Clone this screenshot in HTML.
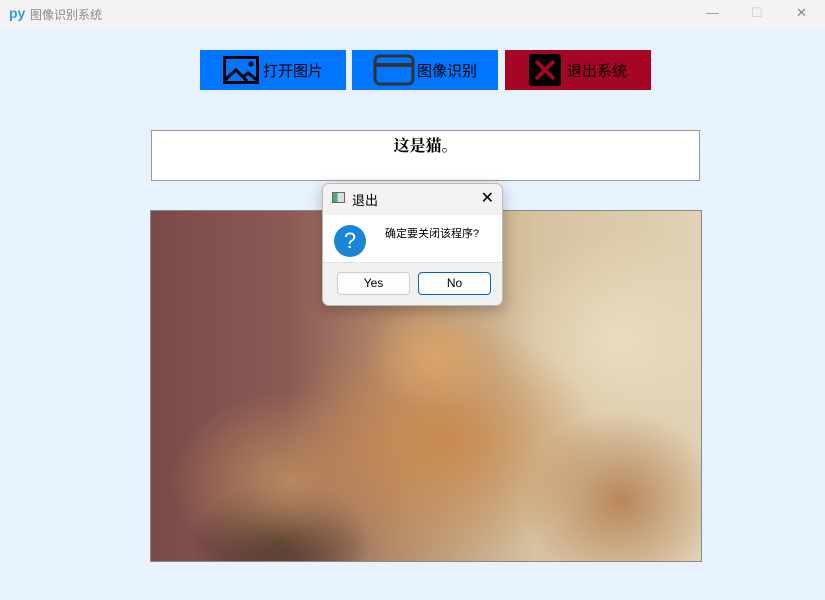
<!DOCTYPE html>
<html><head><meta charset="utf-8"><style>
*{margin:0;padding:0;box-sizing:border-box}
body{width:825px;height:600px;background:#e8f2fe;position:relative;overflow:hidden;font-family:"Liberation Sans","Noto Sans CJK SC",sans-serif}
.tb{position:absolute;left:0;top:0;width:825px;height:29px;background:#f3f3f3}
.tb .py{position:absolute;left:9px;top:5px;color:#2b9be0;font-weight:bold;font-size:14px}
.tb .t{position:absolute;left:30px;top:6px;color:#8a8a8a;font-size:12px}
.tb .c{position:absolute;top:5px;color:#888;font-size:13px}
.btn{position:absolute;top:50px;height:40px;width:146px;display:flex;align-items:center;justify-content:center;font-size:15px;color:#000}
.res{position:absolute;left:151px;top:130px;width:549px;height:51px;background:#fff;border:1px solid #999;text-align:center;font-family:"Liberation Serif","Noto Serif CJK SC",serif;font-weight:bold;font-size:16px;padding-top:2px}
.img{position:absolute;left:150px;top:210px;width:552px;height:352px;border:1px solid #888;
background:
radial-gradient(ellipse 70px 55px at 285px 145px,#d9a36a,transparent),
radial-gradient(ellipse 160px 120px at 290px 230px,#c88a4f,transparent),
radial-gradient(ellipse 120px 90px at 140px 270px,#b7875e,transparent),
radial-gradient(ellipse 100px 90px at 470px 290px,#b9875a,transparent),
radial-gradient(ellipse 120px 110px at 470px 130px,#eadcc0,transparent),
radial-gradient(ellipse 90px 60px at 130px 330px,#3a2a20,transparent),
linear-gradient(90deg,#7a4a48 0%,#8a5a55 25%,#b58d6c 45%,#d6c2a0 70%,#e0d2b5 100%);}
.dlg{position:absolute;left:322px;top:183px;width:181px;height:123px;border:1px solid #bbb;border-radius:7px;overflow:hidden;background:#f0f0f0;box-shadow:0 4px 14px rgba(0,0,0,.25)}
.dlg .hd{height:31px;background:#f3f2f1;font-size:13px;position:relative}
.dlg .bd{position:absolute;top:31px;left:0;right:0;height:48px;background:#fff;border-bottom:1px solid #e2e2e2}
.b2{position:absolute;top:88px;width:73px;height:23px;background:#fdfdfd;border:1px solid #ccc;border-radius:4px;font-size:12px;text-align:center;line-height:21px}
</style></head><body>
<div class="tb"><span class="py">py</span><span class="t">图像识别系统</span>
<span class="c" style="left:706px;color:#999">—</span><span class="c" style="left:751px;color:#ccc">☐</span><span class="c" style="left:796px">✕</span></div>

<div class="btn" style="left:200px;background:#0076fe">
<svg width="36" height="28" viewBox="0 0 36 28" style="margin-right:4px"><rect x="1.5" y="1.5" width="33" height="25" fill="none" stroke="#000" stroke-width="3"/><circle cx="28" cy="8" r="2.5"/><path d="M2 24 L13 14 L24 25 M20 21 L25 17 L34 24" fill="none" stroke="#000" stroke-width="3"/></svg>打开图片</div>
<div class="btn" style="left:352px;background:#0076fe">
<svg width="42" height="32" viewBox="0 0 42 32" style="margin-right:2px"><rect x="2" y="2" width="38" height="28" rx="5" fill="none" stroke="#333" stroke-width="3"/><rect x="2" y="9" width="38" height="4" fill="#333"/></svg>图像识别</div>
<div class="btn" style="left:505px;background:#a50623">
<svg width="32" height="32" viewBox="0 0 32 32" style="margin-right:6px"><rect width="32" height="32" rx="3" fill="#000"/><path d="M7 7 L25 25 M25 7 L7 25" stroke="#a50623" stroke-width="4"/></svg>退出系统</div>

<div class="res">这是猫。</div>
<div class="img"></div>

<div class="dlg">
<div class="hd"><span style="position:absolute;left:9px;top:8px;width:13px;height:11px;border:1px solid #666;background:linear-gradient(90deg,#4a8 40%,#ddd 40%)"></span><span style="position:absolute;left:29px;top:6px">退出</span><span style="position:absolute;right:8px;top:4px;font-size:16px">✕</span></div>
<div class="bd"><div style="position:absolute;left:11px;top:10px;width:32px;height:32px;border-radius:50%;background:#1a86d8;color:#fff;font-size:22px;text-align:center;line-height:32px">?</div><span style="position:absolute;left:62px;top:10px;font-size:11px">确定要关闭该程序?</span></div>
<div class="b2" style="left:14px">Yes</div>
<div class="b2" style="left:95px;border:1px solid #0067c0">No</div>
</div>
</body></html>
